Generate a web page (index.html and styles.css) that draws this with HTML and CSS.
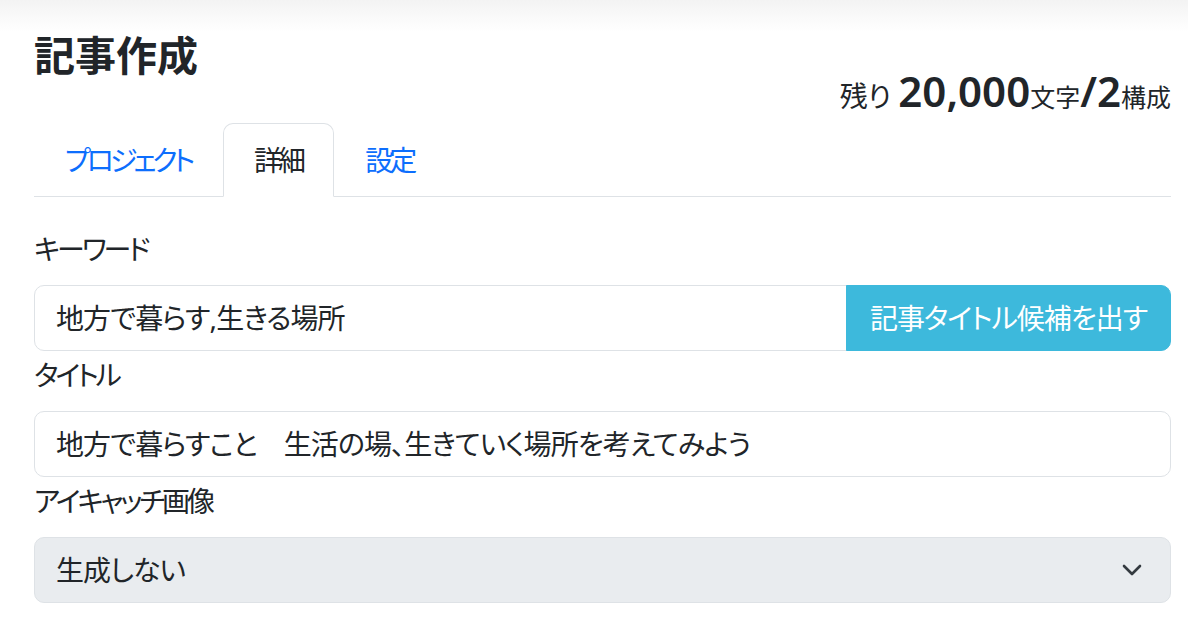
FILE: index.html
```html
<!DOCTYPE html>
<html lang="ja">
<head>
    <meta charset="UTF-8">
    <meta name="viewport" content="width=device-width, initial-scale=1.0">
    <title>記事作成</title>
    <link rel="stylesheet" href="styles.css">
</head>
<body>
    <div class="page">
        <h4 class="page-title">記事作成</h4>

        <div class="quota">
            残り <span class="quota-num">20,000</span><small>文字</small><span class="quota-num">/2</span><small>構成</small>
        </div>

        <ul class="tabs">
            <li><a class="tab-link" href="#">プロジェクト</a></li>
            <li><a class="tab-link active" href="#">詳細</a></li>
            <li><a class="tab-link" href="#">設定</a></li>
        </ul>

        <div class="form-group first">
            <label class="form-label">キーワード</label>
            <div class="input-group">
                <div class="form-control">地方で暮らす,生きる場所</div>
                <button class="btn-info">記事タイトル候補を出す</button>
            </div>
        </div>

        <div class="form-group">
            <label class="form-label">タイトル</label>
            <div class="form-control">地方で暮らすこと　生活の場、生きていく場所を考えてみよう</div>
        </div>

        <div class="form-group">
            <label class="form-label">アイキャッチ画像</label>
            <div class="form-select">
                <span>生成しない</span>
                <svg class="chevron" width="20" height="13" viewBox="0 0 20 13">
                    <path d="M2 2l8 8 8-8" fill="none" stroke="#343a40" stroke-width="2.6" stroke-linecap="round" stroke-linejoin="round"/>
                </svg>
            </div>
        </div>
    </div>
</body>
</html>
```

FILE: styles.css
```css
:root {
    --text-color: #212529;
    --link-color: #0d6efd;
    --border-color: #dee2e6;
    --info-color: #3db9dc;
    --disabled-bg: #e9ecef;
    --radius: 10px;
}

body {
    margin: 0;
    font-family: "Noto Sans", "Noto Sans CJK JP", sans-serif;
    font-size: 28px;
    line-height: 1.5;
    font-feature-settings: "palt";
    color: var(--text-color);
    background: linear-gradient(to bottom, #f3f3f3 0, #fafafa 18px, #fff 32px) no-repeat;
}

.page {
    padding: 30px 17px 0 34px;
}

.page-title {
    margin: 0;
    font-size: 41px;
    font-weight: 700;
    line-height: 50px;
}

/* remaining characters / structures */
.quota {
    text-align: right;
    line-height: 1;
    margin-top: -10px;
}

.quota-num {
    font-size: 42px;
    font-weight: 600;
}

.quota small {
    font-size: 25px;
}

/* tabs */
.tabs {
    display: flex;
    list-style: none;
    margin: 11px 0 0;
    padding: 0;
    border-bottom: 1px solid var(--border-color);
}

.tab-link {
    display: block;
    padding: 15px 31px 15px 30px;
    line-height: 42px;
    letter-spacing: -4px;
    margin-bottom: -1px;
    border: 1px solid transparent;
    border-radius: var(--radius) var(--radius) 0 0;
    color: var(--link-color);
    text-decoration: none;
}

.tab-link.active {
    color: var(--text-color);
    background-color: #fff;
    border-color: var(--border-color) var(--border-color) #fff;
}

/* form */
.form-group {
    margin-top: 3px;
}

.form-group.first {
    margin-top: 31px;
}

.form-label {
    display: block;
    margin-bottom: 15px;
    line-height: 42px;
    letter-spacing: -3px;
}

.form-control,
.form-select {
    display: block;
    padding: 11px 21px;
    line-height: 42px;
    letter-spacing: -0.9px;
    border: 1px solid var(--border-color);
    border-radius: var(--radius);
    background-color: #fff;
    white-space: nowrap;
}

.input-group {
    display: flex;
}

.input-group .form-control {
    flex: 1;
    border-radius: var(--radius) 0 0 var(--radius);
}

.btn-info {
    padding: 11px 23px;
    font: inherit;
    line-height: 42px;
    letter-spacing: -1px;
    color: #fff;
    background-color: var(--info-color);
    border: 1px solid var(--info-color);
    border-radius: 0 var(--radius) var(--radius) 0;
    white-space: nowrap;
    margin-left: -1px;
}

.form-select {
    display: flex;
    align-items: center;
    justify-content: space-between;
    padding-right: 28px;
    background-color: var(--disabled-bg);
}

.chevron {
    display: block;
}
```
